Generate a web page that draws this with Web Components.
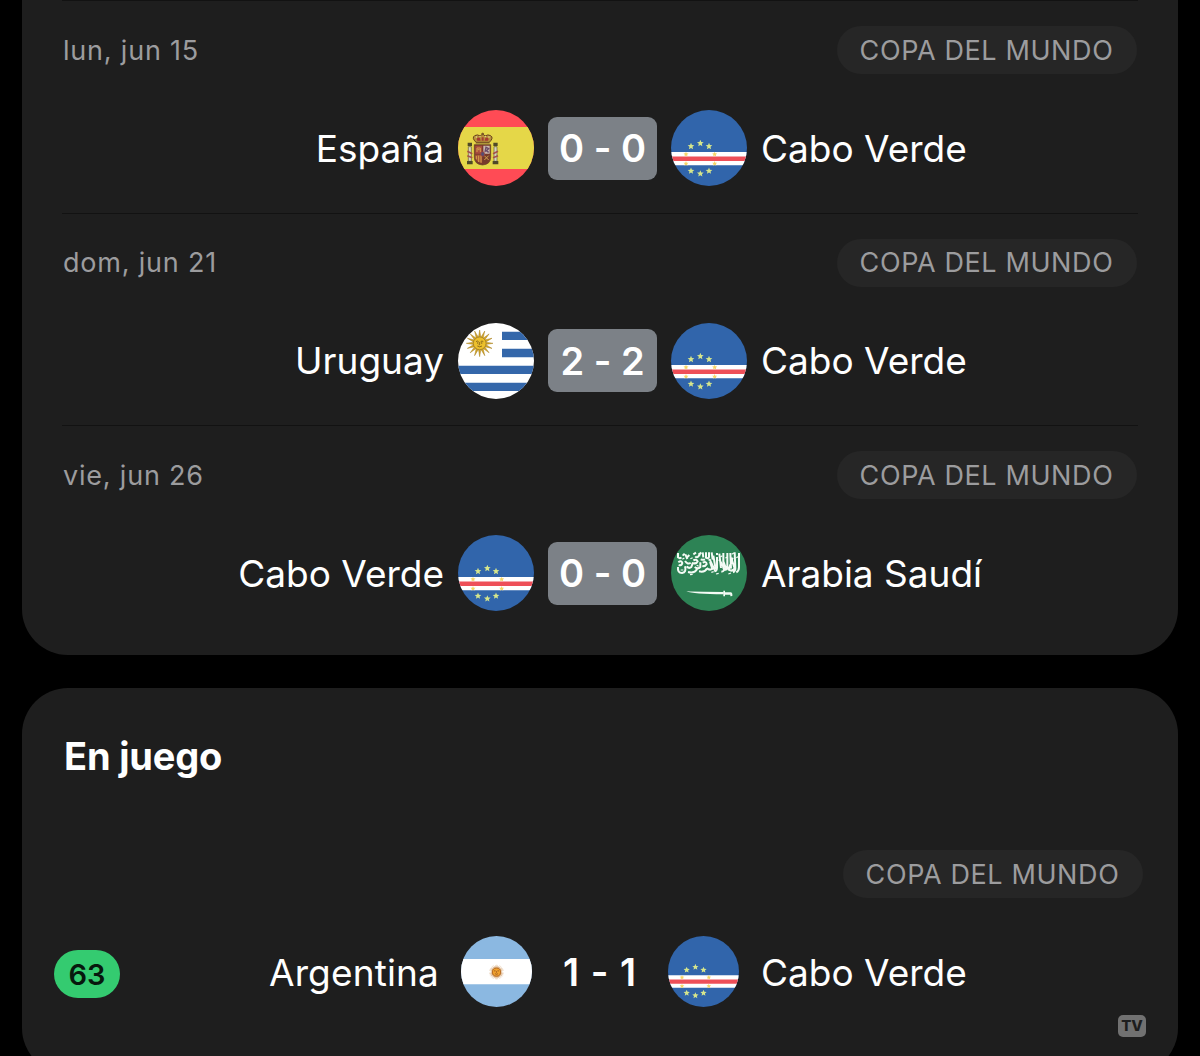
<!DOCTYPE html>
<html lang="es">
<head>
<meta charset="utf-8">
<title>Copa del Mundo</title>
<style>
  body {
    margin: 0;
    height: 1056px;
    overflow: hidden;
    background: #000;
    color: #fff;
    font-family: Inter, "Liberation Sans", sans-serif;
  }
</style>
</head>
<body>

<match-list>
  <match-card class="past">
    <match-row date="lun, jun 15" league="COPA DEL MUNDO" home="España" home-flag="es" away="Cabo Verde" away-flag="cv" score="0 - 0"></match-row>
    <match-row date="dom, jun 21" league="COPA DEL MUNDO" home="Uruguay" home-flag="uy" away="Cabo Verde" away-flag="cv" score="2 - 2"></match-row>
    <match-row date="vie, jun 26" league="COPA DEL MUNDO" home="Cabo Verde" home-flag="cv" away="Arabia Saudí" away-flag="sa" score="0 - 0"></match-row>
  </match-card>
  <match-card class="live">
    <card-title>En juego</card-title>
    <live-match minute="63" league="COPA DEL MUNDO" home="Argentina" home-flag="ar" away="Cabo Verde" away-flag="cv" score="1 - 1"></live-match>
  </match-card>
</match-list>

<script>
function starPoints(cx, cy, r) {
  const points = []
  for (let i = 0; i < 10; i++) {
    const radius = i % 2 ? r * 0.45 : r
    const angle = Math.PI * i / 5 - Math.PI / 2
    points.push((cx + radius * Math.cos(angle)).toFixed(1) + ',' + (cy + radius * Math.sin(angle)).toFixed(1))
  }
  return points.join(' ')
}

function sunRays(cx, cy, inner, outer, count, width) {
  let d = ''
  for (let i = 0; i < count; i++) {
    const a = 2 * Math.PI * i / count
    const at = (r, t) => (cx + r * Math.cos(t)).toFixed(1) + ' ' + (cy + r * Math.sin(t)).toFixed(1)
    d += `M${at(inner, a - width)}L${at(outer, a)}L${at(inner, a + width)}Z`
  }
  return d
}

const capeVerdeStars = [
  [60, 109], [88, 100], [114, 109], [45, 133], [131, 133],
  [45, 161], [131, 161], [60, 183], [88, 191], [114, 183]
]

// every flag is drawn on a 228 x 228 square and clipped to a circle by the host
const flags = {
  cv: `
    <path fill="#3165ab" d="M0 0h228v228H0z"/>
    <path fill="#fff" d="M0 126h228v40H0z"/>
    <path fill="#ee4f58" d="M0 139.500h228v13.500H0z"/>
    ${capeVerdeStars.map(([x, y]) => `<polygon fill="${y > 120 && y < 170 ? '#f5d565' : '#d6e68c'}" points="${starPoints(x, y, y > 120 && y < 170 ? 8 : 10.5)}"/>`).join('')}`,

  es: `
    <path fill="#ff4b55" d="M0 0h228v228H0z"/>
    <path fill="#e5d748" d="M0 51h228v126H0z"/>
    <g fill="#d8d3bd" stroke="#5f5a35" stroke-width="2">
      <path d="M31 110h9v44h-9zM108 110h9v44h-9z"/>
    </g>
    <g fill="#4f4927">
      <path d="M29 98h13v10H29zM106 98h13v10h-13zM27 153h17v10H27zM104 153h17v10h-17z"/>
    </g>
    <g fill="none" stroke="#a45149" stroke-width="5">
      <path d="M28 124l15 7M28 137l15 6M120 124l-15 7M120 137l-15 6"/>
    </g>
    <path fill="#7b3b2c" stroke="#5d3922" stroke-width="2" d="M49 104h49v38q0 21-24.500 23Q49 163 49 142z"/>
    <path fill="#a84c3e" d="M52 107h20v24H52z"/>
    <path fill="#cbb9ae" d="M76 107h19v24H76z"/>
    <path fill="#a85537" d="M52 134h20v25q-19-3-20-17z"/>
    <path fill="#743b2b" d="M76 134h19v10q-2 13-19 16z"/>
    <path stroke="#d4a34d" stroke-width="3" fill="none" d="M57 126v-12h10v12M59 119h6M55 138v10M62 137v19M69 137v21M79 137l13 13M92 137l-13 13"/>
    <path stroke="#6b4b68" stroke-width="4" fill="none" d="M81 126l3-14 8 4-7 6 7 5"/>
    <ellipse cx="74" cy="132" rx="6" ry="7" fill="#554d72" stroke="#a94739" stroke-width="2"/>
    <path fill="#b9923c" stroke="#67401e" stroke-width="3" d="M54 97q-14-14-4-20 8-5 17 1 3-5 7-5t7 5q9-6 17-1 10 6-4 20z"/>
    <path fill="#a53b32" d="M56 88q2-9 10-4l2 8H58zM92 88q-2-9-10-4l-2 8h10zM71 82h6v10h-6z"/>
    <path stroke="#7c5a28" stroke-width="3" d="M74 76v-8M70 71h8M53 99h42"/>
    <g fill="#f0e0a0"><circle cx="55" cy="81" r="2"/><circle cx="66" cy="79" r="2"/><circle cx="82" cy="79" r="2"/><circle cx="93" cy="81" r="2"/></g>`,

  uy: `
    <path fill="#fff" d="M0 0h228v228H0z"/>
    <path fill="#3467aa" d="M132 26h96v25h-96zM132 77h96v26h-96zM0 128h228v25H0zM0 179h228v25H0z"/>
    <path fill="#d3a526" stroke="#a88322" stroke-width="1.500" d="${sunRays(65, 61, 18, 40, 16, 0.2)}"/>
    <circle cx="65" cy="61" r="19" fill="#ecc02c" stroke="#86651d" stroke-width="1.500"/>
    <path fill="none" stroke="#7d5f1b" stroke-width="2.500" d="M54 56q4-4 8 0M68 56q4-4 8 0M65 57v8h-3M58 69q7 5 14 0"/>
    <path stroke="#70551b" stroke-width="3" d="M57 60h4M69 60h4"/>`,

  sa: `
    <path fill="#2d8355" d="M0 0h228v228H0z"/>
    <g transform="translate(-33 -30)" fill="none" stroke="#f4fbf5" stroke-width="6">
      <path d="M54 84v13q6 5 10 0M68 92l6-6M76 88l6 14M88 90l-6 6M100 88l8-5M106 94q4 6 9 0l8-12M118 84v10M128 82l2 15M138 82v16q6 4 9-2V82M155 82l3 22"/>
      <path d="M55 112q9-7 12 2-2 9-11 6M54 126q-2 18 12 18 14-2 9-20M75 108q8 12 17 5M80 124q7 8 14 2l5-14M100 106q9-5 13 3-4 9-13 5"/>
      <path d="M84 141q20 5 27-8M104 126q10 8 17 0v-14M122 103q8 3 13 0M128 113q11-5 12 4-4 8-13 6M117 139q18 4 24-9M140 129q8 8 17 3l-7-21"/>
      <path d="M149 103l16 34M160 92l7 40M171 96v32q0 10-8 11M171 84v6M178 86l5 43M184 140q12-1 7-14l-14-23"/>
      <path d="M190 84v44q2 9 9 5l-9-24M202 84v48M211 84l2 47M218 98l-12 36q11 7 18-4l-8-24M224 82l2 48q0 9-7 12M237 84v43q0 11-8 15"/>
      <path stroke-width="3.500" d="M91 101l7-3M67 103l6-4M110 121l6 3M145 106l6-4M181 96l6-4M168 147l8-2M98 148l-8 1M62 135h8M154 142l7-2M196 99l7-3M215 88l7-4M229 98l8-4M205 147l8-3"/>
    </g>
    <g transform="translate(-33 -30)" fill="#f4fbf5">
      <path d="M79 199q14 1 112 2v7q-91 0-112-9z"/>
      <path d="M190 197h5v5h17q6 0 5 11l-6 1v-5h-16v5h-5z"/>
    </g>`,

  ar: `
    <path fill="#8bb8e1" d="M0 0h228v228H0z"/>
    <path fill="#fff" d="M0 74h228v81H0z"/>
    <path fill="#cf9a63" d="${sunRays(114, 116, 11, 26, 32, 0.14)}"/>
    <circle cx="114" cy="116" r="13" fill="#f0a12f" stroke="#b5691f" stroke-width="3"/>
    <path fill="none" stroke="#94531e" stroke-width="2.500" d="M106 112h5M117 112h5M114 113v5M109 121q5 4 10 0"/>`
}

class MatchList extends HTMLElement {
  constructor() {
    super()
    this.attachShadow({mode: 'open'}).innerHTML = `
      <style>
        :host {
          display: flex;
          flex-direction: column;
          gap: 33px;
          padding: 0 22px;
        }
      </style>
      <slot></slot>
    `
  }
}

class MatchCard extends HTMLElement {
  constructor() {
    super()
    this.attachShadow({mode: 'open'}).innerHTML = `
      <style>
        :host {
          display: block;
          box-sizing: border-box;
          background: #1e1e1e;
          overflow: hidden;
        }
        :host(.past) {
          height: 655px;
          padding: 0 40px;
          border-radius: 0 0 46px 46px;
        }
        :host(.live) {
          height: 386px;
          padding: 0 32px;
          border-radius: 46px;
        }
      </style>
      <slot></slot>
    `
  }
}

class CardTitle extends HTMLElement {
  constructor() {
    super()
    this.attachShadow({mode: 'open'}).innerHTML = `
      <style>
        :host {
          display: block;
          height: 162px;
          padding: 44px 10px 0;
          box-sizing: border-box;
          font-size: 38px;
          line-height: 48px;
          font-weight: 700;
          letter-spacing: -0.2px;
        }
      </style>
      <slot></slot>
    `
  }
}

class LeaguePill extends HTMLElement {
  constructor() {
    super()
    this.attachShadow({mode: 'open'}).innerHTML = `
      <style>
        :host {
          display: flex;
          align-items: center;
          justify-content: center;
          box-sizing: border-box;
          width: 300px;
          height: 48px;
          padding-right: 1px;
          border-radius: 24px;
          background: #262626;
          color: #9c9c9e;
          font-size: 27px;
          letter-spacing: 0.6px;
          white-space: nowrap;
        }
      </style>
      <slot></slot>
    `
  }
}

class TeamFlag extends HTMLElement {
  constructor() {
    super()
    this.attachShadow({mode: 'open'}).innerHTML = `
      <style>
        :host {
          display: block;
          width: var(--flag-size, 76px);
          height: var(--flag-size, 76px);
          border-radius: 50%;
          overflow: hidden;
        }
        svg { display: block; }
      </style>
      <svg viewBox="0 0 228 228" width="100%" height="100%">${flags[this.getAttribute('country')]}</svg>
    `
  }
}

class MatchRow extends HTMLElement {
  constructor() {
    super()
    const get = name => this.getAttribute(name)
    this.attachShadow({mode: 'open'}).innerHTML = `
      <style>
        :host {
          display: block;
          box-sizing: border-box;
          height: 212.7px;
          padding-top: 25px;
          border-top: 1px solid #121212;
        }
        header {
          display: flex;
          justify-content: space-between;
          align-items: center;
          padding-right: 1px;
        }
        time {
          color: #9c9c9e;
          font-size: 27px;
          letter-spacing: 0.8px;
          padding-left: 1px;
        }
        .teams {
          display: grid;
          grid-template-columns: 382px 76px 109px 76px 1fr;
          column-gap: 14px;
          align-items: center;
          height: 76px;
          margin-top: 36px;
          font-size: 37px;
          white-space: nowrap;
        }
        .home { text-align: right; }
        .score {
          display: flex;
          align-items: center;
          justify-content: center;
          height: 63px;
          border-radius: 9px;
          background: #7c8187;
          font-size: 38px;
          font-weight: 600;
          font-feature-settings: "calt" 0;
        }
      </style>
      <header>
        <time>${get('date')}</time>
        <league-pill>${get('league')}</league-pill>
      </header>
      <div class="teams">
        <span class="home">${get('home')}</span>
        <team-flag country="${get('home-flag')}"></team-flag>
        <span class="score">${get('score')}</span>
        <team-flag country="${get('away-flag')}"></team-flag>
        <span class="away">${get('away')}</span>
      </div>
    `
  }
}

class LiveMatch extends HTMLElement {
  constructor() {
    super()
    const get = name => this.getAttribute(name)
    this.attachShadow({mode: 'open'}).innerHTML = `
      <style>
        :host {
          display: flex;
          flex-direction: column;
          --flag-size: 71px;
        }
        league-pill {
          align-self: flex-end;
          margin-right: 3px;
        }
        .teams {
          display: grid;
          grid-template-columns: 66px 341px 71px 136px 71px 1fr;
          align-items: center;
          height: 71px;
          margin-top: 38px;
          font-size: 37px;
          white-space: nowrap;
        }
        .minute {
          display: flex;
          align-items: center;
          justify-content: center;
          height: 48px;
          margin-top: 5px;
          border-radius: 24px;
          background: #34cb70;
          color: #07180d;
          font-size: 29px;
          font-weight: 600;
        }
        .home {
          text-align: right;
          letter-spacing: 0.15px;
          padding-right: 22px;
          padding-top: 2px;
        }
        .score {
          text-align: center;
          font-size: 38px;
          font-weight: 600;
          letter-spacing: 1px;
          font-feature-settings: "calt" 0;
        }
        .away {
          padding-left: 22px;
          padding-top: 2px;
        }
        .tv {
          align-self: flex-end;
          width: 28px;
          height: 22px;
          margin: 8px 0 0;
          border-radius: 5px;
          background: #717171;
          color: #1e1e1e;
          font-size: 15px;
          line-height: 22px;
          font-weight: 800;
          text-align: center;
        }
      </style>
      <league-pill>${get('league')}</league-pill>
      <div class="teams">
        <span class="minute">${get('minute')}</span>
        <span class="home">${get('home')}</span>
        <team-flag country="${get('home-flag')}"></team-flag>
        <span class="score">${get('score')}</span>
        <team-flag country="${get('away-flag')}"></team-flag>
        <span class="away">${get('away')}</span>
      </div>
      <span class="tv">TV</span>
    `
  }
}

customElements.define('team-flag', TeamFlag)
customElements.define('league-pill', LeaguePill)
customElements.define('card-title', CardTitle)
customElements.define('match-row', MatchRow)
customElements.define('live-match', LiveMatch)
customElements.define('match-card', MatchCard)
customElements.define('match-list', MatchList)
</script>
</body>
</html>
